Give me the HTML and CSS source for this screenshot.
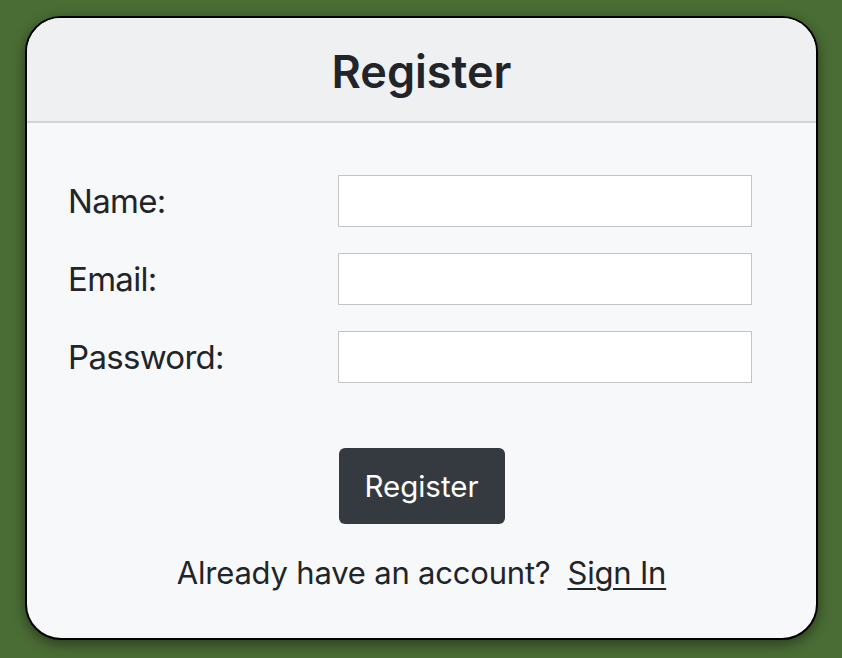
FILE: index.html
```html
<!DOCTYPE html>
<html>
<head>
<meta charset="utf-8">
<link rel="stylesheet" href="styles.css">
</head>
<body>
<div class="card">
  <div class="card-header"><h2 class="title">Register</h2></div>
  <div class="card-body">
    <form class="form">
      <label class="label" for="name">Name:</label>
      <input class="input" id="name" type="text">
      <label class="label" for="email">Email:</label>
      <input class="input" id="email" type="email">
      <label class="label" for="pw">Password:</label>
      <input class="input" id="pw" type="password">
    </form>
    <div class="actions"><button class="btn" type="button">Register</button></div>
    <p class="footer-text">Already have an account?&nbsp; <a class="link" href="#">Sign In</a></p>
  </div>
</div>
</body>
</html>
```
FILE: styles.css
```css
html, body { margin: 0; padding: 0; }
body {
  background: #4a6d35;
  width: 842px;
  height: 658px;
  overflow: hidden;
  font-family: Inter, "Noto Sans", sans-serif;
  color: #212529;
}
.card {
  box-sizing: border-box;
  margin: 16px 0 0 25px;
  width: 793px;
  height: 624px;
  border: 2px solid #000;
  border-radius: 36px;
  background: #f7f8fa;
  overflow: hidden;
  box-shadow: 0 4px 14px rgba(0,0,0,0.45);
  display: flex;
  flex-direction: column;
}
.card-header {
  background: #eff0f2;
  border-bottom: 2px solid #d3d4d6;
  height: 99px;
  padding-top: 4px;
  display: flex;
  align-items: center;
  justify-content: center;
}
.title {
  margin: 0;
  font-size: 45px;
  font-weight: 600;
  line-height: 54px;
}
.card-body {
  padding: 52px 64px 0 41px;
  display: flex;
  flex-direction: column;
}
.form {
  display: grid;
  grid-template-columns: 270px 1fr;
  row-gap: 26px;
  align-items: center;
}
.label {
  font-size: 33px;
  font-weight: 400;
  letter-spacing: -0.7px;
  line-height: 40px;
}
.input {
  box-sizing: border-box;
  height: 52px;
  border: 1px solid #c3c4c6;
  background: #fff;
  border-radius: 0;
  margin: 0;
}
.actions {
  display: flex;
  justify-content: center;
  margin-top: 65px;
  padding-left: 23px;
}
.btn {
  width: 166px;
  height: 76px;
  border: none;
  border-radius: 6px;
  background: #343a40;
  color: #fff;
  font-family: Inter, "Noto Sans", sans-serif;
  font-size: 29.5px;
  padding: 0;
}
.footer-text {
  margin: 30px 0 0 0;
  padding-left: 23px;
  text-align: center;
  font-size: 31px;
  letter-spacing: -0.2px;
  line-height: 37.5px;
}
.link { color: #212529; text-decoration: underline; text-underline-offset: 4px; text-decoration-thickness: 2px; }
```
